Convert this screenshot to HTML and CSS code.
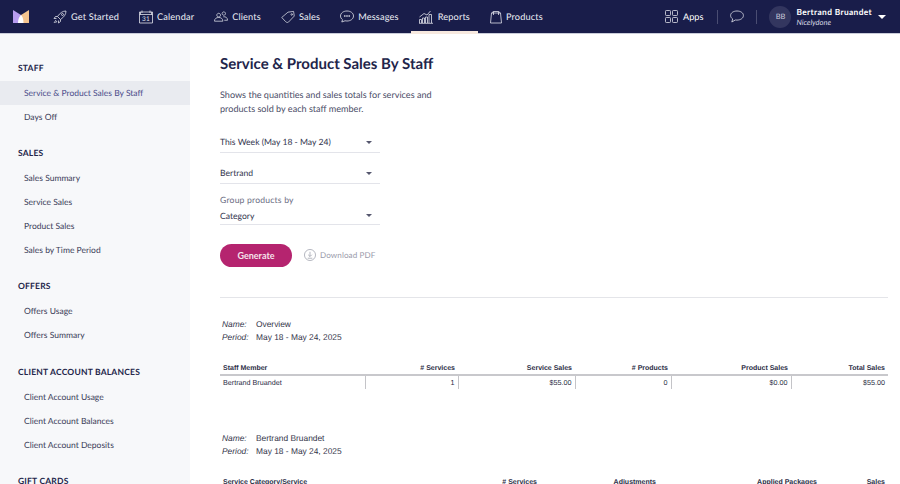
FILE: index.html
```html
<!DOCTYPE html>
<html lang="en">
<head>
<meta charset="utf-8">
<title>Service &amp; Product Sales By Staff</title>
<link rel="stylesheet" href="styles.css">
</head>
<body>
<header class="topbar">
  <svg class="logo" viewBox="0 0 16 13" width="16" height="13"><path d="M0 0L8 5V13H0Z" fill="#b79cf0"/><path d="M16 0L8 5V13H16Z" fill="#f5c48f"/><path d="M5 13C5 9 6.500 6.500 8 5C9.500 6.500 10.500 9 10.500 13Z" fill="#fff"/></svg>
  <nav class="nav">
    <a class="nav-item"><svg class="ic" viewBox="0 0 14 14"><path d="M13 1C9.500 1 7 3 4.500 6.500L7.500 9.500C11 7 13 4.500 13 1ZM4.500 6.500L2.500 6.500L1 8.500L3.500 8.500M7.500 9.500V11.500L5.500 13V10.500M3 10L1 13M4 11L2.500 13M9.500 3.500a1 1 0 1 0 1 1a1 1 0 0 0-1-1"/></svg>Get Started</a>
    <a class="nav-item"><svg class="ic" viewBox="0 0 14 14"><path d="M.5 2H13.500V13H.5ZM.5 4.500H13.500M3 .5V3M11 .5V3M1.500 2V4.500M12.500 2V4.500"/><text x="7" y="11.300" class="ic-text">31</text></svg>Calendar</a>
    <a class="nav-item"><svg class="ic" viewBox="0 0 15 14"><path d="M5 3a2 2 0 1 0 .01 0M.5 11.500C.5 8.800 2.500 7.500 5 7.500S9.500 8.800 9.500 11.500ZM10.500 1.500a1.800 1.800 0 1 0 .01 0M10 6.800C12.500 6.300 14.500 7.800 14.500 10.500H11"/></svg>Clients</a>
    <a class="nav-item"><svg class="ic" viewBox="0 0 15 14"><path d="M.8 7.500L7.500 1.800L13.500 1L14.200 6L8 12.500C6.800 13.200 6 12.800 5 12ZM11.500 3.500a.8.800 0 1 0 .01 0"/></svg>Sales</a>
    <a class="nav-item"><svg class="ic" viewBox="0 0 14 14"><path d="M7 1C3.500 1 .5 3 .5 6C.5 7.500 1.300 8.800 2.500 9.700L1.800 12L5 10.800C5.600 10.900 6.300 11 7 11C10.500 11 13.500 9 13.500 6S10.500 1 7 1Z"/><path class="dots" d="M4.600 6H5M6.800 6H7.200M9 6H9.400"/></svg>Messages</a>
    <a class="nav-item active"><svg class="ic ic-rep" viewBox="0 0 14 14"><path d="M.5 13V9.500H2.500V13M3.500 13V8H5.500V13M6.500 13V7H8.500V13M10 13V4.500H12.500V13M.5 7L5 3.500L8 5L11.500 1M0 13.300H14"/></svg>Reports</a>
    <a class="nav-item"><svg class="ic ic-prod" viewBox="0 0 12 14"><path d="M1.500 3H10.500L11.500 13H.5ZM3.500 5V1.500H8.500V5M1.500 3L3.500 1.500M10.500 3L8.500 1.500"/></svg>Products</a>
  </nav>
  <div class="tools">
    <a class="apps"><svg class="ic ic-apps" viewBox="0 0 13 13"><rect x=".5" y=".5" width="5" height="5" rx=".8"/><rect x="7.500" y=".5" width="5" height="5" rx=".8"/><rect x=".5" y="7.500" width="5" height="5" rx=".8"/><rect x="7.500" y="7.500" width="5" height="5" rx=".8"/></svg>Apps</a>
    <span class="divider"></span>
    <svg class="ic chat" viewBox="0 0 14 13"><path d="M7 1C3.500 1 .6 2.800 .6 5.500C.6 7 1.500 8.200 2.700 9L1.800 12L5.300 10C5.900 10.100 6.400 10.100 7 10.100C10.500 10.100 13.400 8.200 13.400 5.500S10.500 1 7 1Z"/></svg>
    <span class="divider"></span>
    <span class="avatar">BB</span>
    <span class="user"><b class="user-name">Bertrand Bruandet</b><i class="user-org">Nicelydone</i></span>
    <span class="caret"></span>
  </div>
</header>
<div class="body">
  <aside class="side">
    <section class="side-sec">
      <h4>STAFF</h4>
      <a class="side-item on">Service &amp; Product Sales By Staff</a>
      <a class="side-item">Days Off</a>
    </section>
    <section class="side-sec">
      <h4>SALES</h4>
      <a class="side-item">Sales Summary</a>
      <a class="side-item">Service Sales</a>
      <a class="side-item">Product Sales</a>
      <a class="side-item">Sales by Time Period</a>
    </section>
    <section class="side-sec">
      <h4>OFFERS</h4>
      <a class="side-item">Offers Usage</a>
      <a class="side-item">Offers Summary</a>
    </section>
    <section class="side-sec">
      <h4>CLIENT ACCOUNT BALANCES</h4>
      <a class="side-item">Client Account Usage</a>
      <a class="side-item">Client Account Balances</a>
      <a class="side-item">Client Account Deposits</a>
    </section>
    <section class="side-sec">
      <h4>GIFT CARDS</h4>
    </section>
  </aside>
  <main class="main">
    <h1>Service &amp; Product Sales By Staff</h1>
    <p class="desc">Shows the quantities and sales totals for services and products sold by each staff member.</p>
    <div class="field field-first"><span>This Week (May 18 - May 24)</span><i class="arrow"></i></div>
    <div class="field"><span>Bertrand</span><i class="arrow"></i></div>
    <label class="field-label">Group products by</label>
    <div class="field field-tight"><span>Category</span><i class="arrow"></i></div>
    <div class="actions">
      <button class="btn">Generate</button>
      <svg class="dl" viewBox="0 0 13 13"><circle cx="6.500" cy="6.500" r="6"/><path d="M6.500 3V8M4.500 6.200L6.500 8.200L8.500 6.200M4 10H9"/></svg>
      <a class="dl-text">Download PDF</a>
    </div>
    <hr class="rule">
    <dl class="meta">
      <dt>Name:</dt><dd>Overview</dd>
      <dt>Period:</dt><dd>May 18 - May 24, 2025</dd>
    </dl>
    <table class="report overview">
      <thead><tr><th>Staff Member</th><th># Services</th><th>Service Sales</th><th># Products</th><th>Product Sales</th><th>Total Sales</th></tr></thead>
      <tbody><tr><td>Bertrand Bruandet</td><td>1</td><td>$55.00</td><td>0</td><td>$0.00</td><td>$55.00</td></tr></tbody>
    </table>
    <dl class="meta second">
      <dt>Name:</dt><dd>Bertrand Bruandet</dd>
      <dt>Period:</dt><dd>May 18 - May 24, 2025</dd>
    </dl>
    <table class="report detail">
      <thead><tr><th>Service Category/Service</th><th># Services</th><th>Adjustments</th><th>Applied Packages</th><th>Sales</th></tr></thead>
    </table>
  </main>
</div>
</body>
</html>
```
FILE: styles.css
```css
* { box-sizing: border-box; }
html, body { margin: 0; height: 484px; overflow: hidden; }
body { font-family: Lato, Inter, sans-serif; color: #2b2d4a; background: #fff; text-rendering: geometricPrecision; }
a { color: inherit; text-decoration: none; }

.topbar { height: 34px; background: #191d4a; border-bottom: 1px solid #c9ccd9; display: flex; align-items: center; color: #fff; font-size: 9.200px; padding-left: 13px; }
.logo { flex: none; }
.nav { display: flex; height: 33px; margin-left: 16px; gap: 4px; }
.nav-item { display: flex; align-items: center; padding: 0 8px; letter-spacing: .15px; color: #eceef5; position: relative; }
.nav-item.active::after { content: ""; position: absolute; left: 0; right: 0; bottom: -1px; height: 3px; background: #f7e9df; }
.ic { width: 14px; height: 14px; margin-right: 4px; fill: none; stroke: #dfe1ea; stroke-width: .8; flex: none; }
.ic-rep { margin-right: 5px; }
.ic-prod { width: 12px; }
.ic-apps { width: 13px; height: 13px; margin-right: 5px; }
.ic-text { font-size: 6.500px; text-anchor: middle; fill: #dfe1ea; stroke: none; }
.dots { stroke-width: 1.400; stroke-linecap: round; }
.tools { margin-left: auto; display: flex; align-items: center; padding-right: 14px; }
.apps { display: flex; align-items: center; margin-right: 14px; }
.divider { width: 1px; height: 14px; background: #4a4d72; }
.chat { margin: 0 12px; width: 14px; height: 13px; }
.avatar { width: 22px; height: 22px; border-radius: 50%; background: #33365f; color: #c8cadb; font-size: 7.500px; display: flex; align-items: center; justify-content: center; margin-left: 12px; margin-right: 5px; }
.user { display: flex; flex-direction: column; line-height: 9px; }
.user-name { font-weight: 700; font-size: 8.400px; letter-spacing: .35px; line-height: 11px; }
.user-org { font-size: 7.500px; color: #d6d8e4; }
.caret { width: 0; height: 0; border: 4px solid transparent; border-top: 4.500px solid #fff; border-bottom: 0; margin-left: 6px; }

.body { display: flex; height: 450px; overflow: hidden; }
.side { width: 190px; flex: none; background: #f7f8fa; padding-top: 22px; }
.side-sec { margin-bottom: 12.200px; }
.side-sec h4 { margin: 0 0 1px; height: 24px; line-height: 24px; padding-left: 18px; font-size: 8.500px; font-weight: 700; letter-spacing: .2px; color: #24264a; }
.side-item { display: block; height: 24px; line-height: 24px; padding-left: 24px; font-size: 8.500px; color: #3a3c58; }
.side-item.on { background: #e9ebf0; color: #4b4c8a; }

.main { flex: 1; padding: 0 12px 0 30px; min-width: 0; }
h1 { margin: 20px 0 0; font-size: 15px; line-height: 20px; font-weight: 700; color: #22244a; }
.desc { margin: 14px 0 0; width: 225px; font-size: 9.100px; line-height: 14px; color: #4c4e68; }
.field { width: 160px; height: 21px; border-bottom: 1px solid #e3e4ea; display: flex; justify-content: space-between; align-items: center; font-size: 8.600px; color: #32344e; padding-right: 8px; }
.field-first { margin-top: 16px; }
.field + .field { margin-top: 10px; }
.field-label { display: block; margin-top: 9px; font-size: 8.600px; line-height: 14px; color: #6a6c82; letter-spacing: .2px; }
.field-tight { height: 18px; }
.arrow { width: 0; height: 0; border: 3px solid transparent; border-top: 3px solid #55576e; border-bottom: 0; }
.actions { display: flex; align-items: center; margin-top: 18px; height: 24px; }
.btn { width: 72px; height: 23px; border: 0; border-radius: 12px; background: #b5246f; color: #f5e3ec; font: 700 9px Lato, sans-serif; padding: 0; }
.dl { width: 12px; height: 12px; margin-left: 12px; fill: none; stroke: #8e909f; stroke-width: .7; }
.dl-text { margin-left: 4px; font-size: 8.100px; color: #9a9bab; letter-spacing: .1px; }
.rule { margin: 30px 0 0; border: 0; border-top: 1px solid #e4e5e9; }

.meta { margin: 20px 0 0 2px; display: grid; grid-template-columns: 34px auto; justify-content: start; font: 8.400px/12.500px "Liberation Sans", Arial, sans-serif; color: #33354a; }
.meta dt { font-style: italic; }
.meta dd { margin: 0; }
.meta.second { margin-top: 43px; }
.report { width: 668px; margin-top: 19px; border-collapse: collapse; table-layout: fixed; font: 7px "Liberation Sans", Arial, sans-serif; color: #2b2d45; }
.report th { font-weight: 700; text-align: right; height: 13px; padding: 0 3px; white-space: nowrap; }
.report th:first-child, .report td:first-child { text-align: left; }
.report thead tr { border-bottom: 2px solid #c8c8cc; }
.report td { text-align: right; height: 14px; padding: 0 3px; border-right: 1px solid #c4c4c8; font-size: 7.200px; }
.report td:last-child { border-right: 0; }
.overview th:nth-child(1) { width: 145px; }
.overview th:nth-child(2) { width: 93px; }
.overview th:nth-child(3) { width: 117px; }
.overview th:nth-child(4) { width: 96px; }
.overview th:nth-child(5) { width: 120px; }
.detail th:nth-child(1) { width: 260px; }
.detail th:nth-child(2) { width: 60px; }
.detail th:nth-child(3) { width: 119px; }
.detail th:nth-child(4) { width: 161px; }
```
